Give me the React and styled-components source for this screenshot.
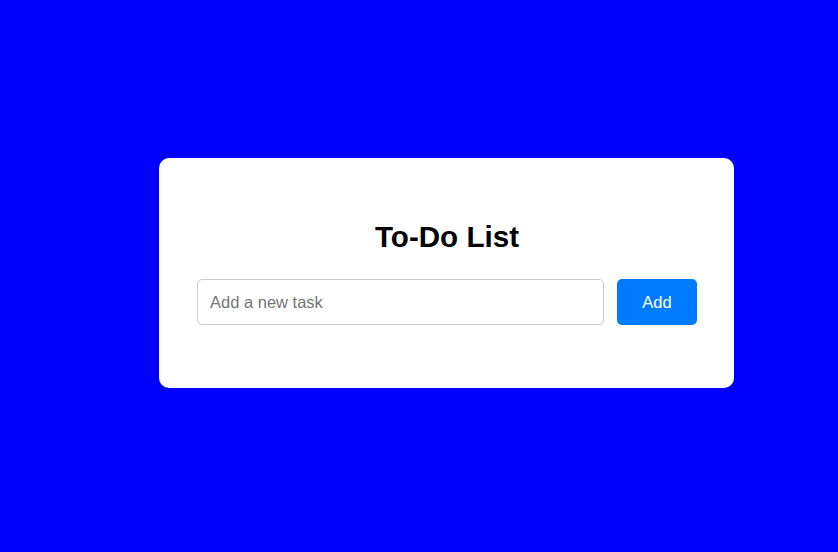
import React, { useState } from "react";
import styled, { createGlobalStyle } from "styled-components";

const GlobalStyle = createGlobalStyle`
  html, body {
    margin: 0;
    padding: 0;
    background: #0000ff;
    font-family: "Liberation Sans", Arial, sans-serif;
  }
`;

const Page = styled.div`
  min-height: 100vh;
  box-sizing: border-box;
  display: flex;
  align-items: center;
  justify-content: center;
  padding: 0 0 6px 55px;
`;

const Card = styled.div`
  width: 575px;
  box-sizing: border-box;
  background: #ffffff;
  border-radius: 10px;
  padding: 40px 37px 41px 38px;
`;

const Title = styled.h1`
  margin: 22px 0 26px;
  font-size: 29.6px;
  line-height: 33px;
  font-weight: bold;
  text-align: center;
  color: #000;
`;

const InputRow = styled.form`
  display: flex;
  gap: 13px;
  margin-bottom: 22px;
`;

const TaskInput = styled.input`
  flex: 1;
  height: 46px;
  box-sizing: border-box;
  padding: 0 12px;
  border: 1px solid #cccccc;
  border-radius: 5px;
  font-family: "Liberation Sans", Arial, sans-serif;
  font-size: 16.5px;
  outline: none;
  &::placeholder {
    color: #757575;
  }
`;

const AddButton = styled.button`
  width: 80px;
  height: 46px;
  border: none;
  border-radius: 5px;
  background: #007bff;
  color: #ffffff;
  font-family: "Liberation Sans", Arial, sans-serif;
  font-size: 16.5px;
  cursor: pointer;
`;

const TaskList = styled.ul`
  list-style: none;
  margin: 0;
  padding: 0;
`;

const TaskItem = styled.li`
  padding: 8px 0;
  border-bottom: 1px solid #eee;
`;

export default function App() {
  const [text, setText] = useState("");
  const [tasks, setTasks] = useState([]);

  const addTask = (e) => {
    e.preventDefault();
    if (!text.trim()) return;
    setTasks([...tasks, text.trim()]);
    setText("");
  };

  return (
    <>
      <GlobalStyle />
      <Page>
        <Card>
          <Title>To-Do List</Title>
          <InputRow onSubmit={addTask}>
            <TaskInput
              placeholder="Add a new task"
              value={text}
              onChange={(e) => setText(e.target.value)}
            />
            <AddButton type="submit">Add</AddButton>
          </InputRow>
          <TaskList>
            {tasks.map((t, i) => (
              <TaskItem key={i}>{t}</TaskItem>
            ))}
          </TaskList>
        </Card>
      </Page>
    </>
  );
}
